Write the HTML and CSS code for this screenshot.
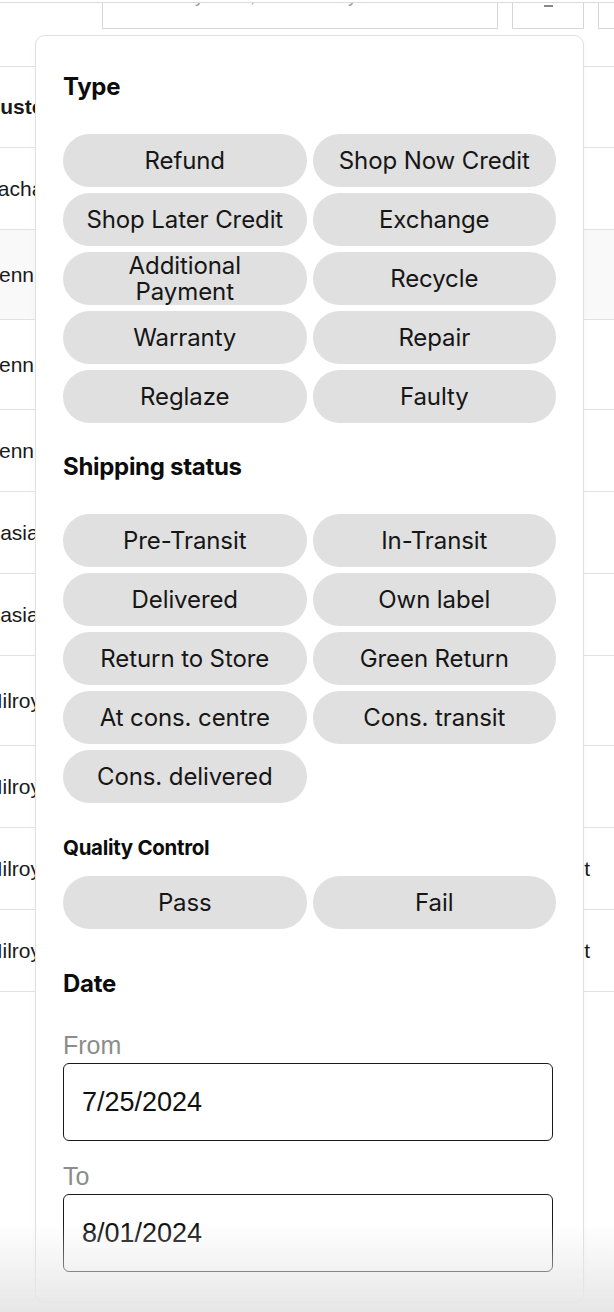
FILE: index.html
```html
<!DOCTYPE html>
<html lang="en">
<head>
<meta charset="utf-8">
<title>Returns filter</title>
<link rel="stylesheet" href="styles.css">
</head>
<body>
<div class="page">
  <div class="toolbar">
    <div class="search"><span class="ph">Search by order, email or key</span></div>
    <div class="btn"><span class="btn-mark"></span></div>
    <div class="btn2"></div>
  </div>

  <div class="table">
    <div class="row head"><span class="cell-name">Customer</span></div>
    <div class="row"><span class="cell-name">Zachary</span></div>
    <div class="row tall shade"><span class="cell-name">Kenn Lee</span></div>
    <div class="row tall"><span class="cell-name">Kenn Lee</span></div>
    <div class="row"><span class="cell-name">Kenn Lee</span></div>
    <div class="row"><span class="cell-name">Nasia</span></div>
    <div class="row"><span class="cell-name">Nasia</span></div>
    <div class="row tall"><span class="cell-name">Milroy</span></div>
    <div class="row"><span class="cell-name">Milroy</span></div>
    <div class="row"><span class="cell-name">Milroy</span><span class="cell-status">In-Transit</span></div>
    <div class="row"><span class="cell-name">Milroy</span><span class="cell-status">In-Transit</span></div>
  </div>

  <div class="panel">
    <h3 class="section-title first">Type</h3>
    <div class="chips">
      <button class="chip">Refund</button>
      <button class="chip">Shop Now Credit</button>
      <button class="chip">Shop Later Credit</button>
      <button class="chip">Exchange</button>
      <button class="chip">Additional Payment</button>
      <button class="chip">Recycle</button>
      <button class="chip">Warranty</button>
      <button class="chip">Repair</button>
      <button class="chip">Reglaze</button>
      <button class="chip">Faulty</button>
    </div>

    <h3 class="section-title shipping">Shipping status</h3>
    <div class="chips">
      <button class="chip">Pre-Transit</button>
      <button class="chip">In-Transit</button>
      <button class="chip">Delivered</button>
      <button class="chip">Own label</button>
      <button class="chip">Return to Store</button>
      <button class="chip">Green Return</button>
      <button class="chip">At cons. centre</button>
      <button class="chip">Cons. transit</button>
      <button class="chip">Cons. delivered</button>
    </div>

    <h4 class="section-sub">Quality Control</h4>
    <div class="chips">
      <button class="chip">Pass</button>
      <button class="chip">Fail</button>
    </div>

    <h3 class="section-title date">Date</h3>
    <label class="field-label from">From</label>
    <div class="date-input">7/25/2024</div>
    <label class="field-label to">To</label>
    <div class="date-input">8/01/2024</div>
  </div>

  <div class="fade"></div>
</div>
</body>
</html>
```

FILE: styles.css
```css
* { box-sizing: border-box; }

html, body {
  margin: 0;
  padding: 0;
  background: #ffffff;
}

body {
  width: 614px;
  height: 1312px;
  overflow: hidden;
  font-family: "Liberation Sans", Arial, sans-serif;
  color: #111;
}

.page {
  position: relative;
  width: 614px;
  height: 1312px;
  overflow: hidden;
}

/* top toolbar (mostly scrolled out of view) */
.toolbar {
  display: flex;
  margin-top: 2px;
  height: 26px;
  border-top: 1px solid #dcdcdc;
}

.search {
  margin-left: 102px;
  width: 396px;
  height: 26px;
  border: 1px solid #d6d6d6;
  border-top: none;
  overflow: hidden;
}

.ph {
  display: block;
  margin-top: -19px;
  padding-left: 20px;
  font-size: 18px;
  line-height: 24px;
  color: #9a9a9a;
  white-space: nowrap;
}

.btn {
  margin-left: 14px;
  width: 72px;
  height: 26px;
  border: 1px solid #d6d6d6;
  border-top: none;
  display: flex;
  justify-content: center;
}

.btn-mark {
  margin-top: 2px;
  width: 9px;
  height: 2px;
  background: #888;
}

.btn2 {
  margin-left: 14px;
  flex: 1;
  height: 26px;
  border: 1px solid #d6d6d6;
  border-top: none;
  border-right: none;
}

/* background table */
.table {
  margin-top: 38px;
  border-top: 1px solid #e2e2e2;
}

.row {
  height: 82px;
  border-bottom: 1px solid #e2e2e2;
  display: flex;
  align-items: center;
  font-size: 21px;
  color: #1a1a1a;
}

.row.head { height: 81px; font-weight: 700; }
.row.tall { height: 90px; }
.row.shade { background: #f9f9f9; }

.cell-name {
  margin-left: -15px;
  white-space: nowrap;
}

.cell-status {
  margin-left: auto;
  margin-right: 24px;
  white-space: nowrap;
}

/* filter dropdown panel */
.panel {
  position: absolute;
  top: 35px;
  left: 35px;
  width: 549px;
  height: 1268px;
  background: #ffffff;
  border: 1px solid #e0e0e0;
  border-radius: 10px;
  padding: 0 27px 0 27px;
  font-family: Inter, "Liberation Sans", Arial, sans-serif;
  box-shadow: 0 2px 6px rgba(0, 0, 0, 0.03);
}

.section-title {
  margin: 0;
  font-size: 24px;
  line-height: 28px;
  font-weight: 700;
  color: #0c0c0c;
  letter-spacing: -0.3px;
}

.section-title.first { margin-top: 37px; margin-bottom: 33px; }
.section-title.shipping { margin-top: 30px; margin-bottom: 33px; }
.section-title.date { margin-top: 41px; }

.section-sub {
  margin: 33px 0 16px 0;
  font-size: 20.5px;
  line-height: 24px;
  font-weight: 700;
  color: #0c0c0c;
  letter-spacing: -0.3px;
}

.chips {
  display: grid;
  grid-template-columns: 1fr 1fr;
  gap: 6px;
}

.chip {
  height: 53px;
  border: none;
  border-radius: 27px;
  background: #e0e0e0;
  color: #161616;
  font-family: Inter, "Liberation Sans", Arial, sans-serif;
  font-size: 24px;
  line-height: 26px;
  font-weight: 400;
  padding: 0 18px;
  text-align: center;
  letter-spacing: -0.1px;
}

.field-label {
  display: block;
  font-family: "Liberation Sans", Arial, sans-serif;
  font-size: 25px;
  line-height: 28px;
  color: #8c8c8c;
  margin-bottom: 4px;
}

.field-label.from { margin-top: 33px; }
.field-label.to { margin-top: 21px; }

.date-input {
  width: 490px;
  height: 78px;
  border: 1px solid #1a1a1a;
  border-radius: 6px;
  padding-left: 18px;
  display: flex;
  align-items: center;
  font-family: "Liberation Sans", Arial, sans-serif;
  font-size: 27px;
  color: #111;
  background: #fff;
}

/* bottom fade overlay */
.fade {
  position: fixed;
  left: 0;
  right: 0;
  bottom: 0;
  height: 88px;
  background: linear-gradient(to bottom, rgba(230, 230, 230, 0), rgba(230, 230, 230, 1));
  pointer-events: none;
}
```
